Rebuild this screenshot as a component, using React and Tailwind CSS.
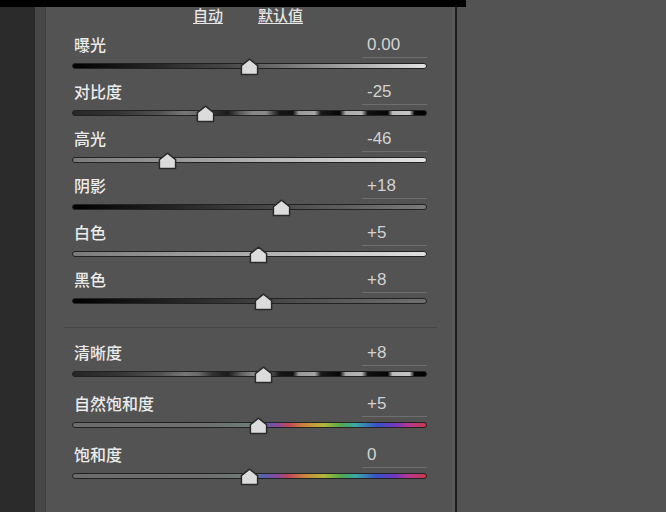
import React from "react";

const CJK = { fontFamily: '"Noto Sans CJK SC", "Noto Sans", sans-serif' };

const contrastStops = [
  [72, "#262626"], [120, "#353535"], [160, "#525252"], [185, "#777777"], [198, "#6a6a6a"],
  [212, "#333333"], [228, "#1a1a1a"], [240, "#5a5a5a"], [252, "#858585"], [266, "#8a8a8a"],
  [274, "#404040"], [280, "#151515"], [293, "#111111"], [299, "#999999"], [315, "#a5a5a5"],
  [321, "#1a1a1a"], [340, "#050505"], [346, "#aaaaaa"], [362, "#b5b5b5"], [368, "#111111"],
  [388, "#050505"], [393, "#bbbbbb"], [410, "#c5c5c5"], [415, "#050505"], [427, "#000000"],
].map(([x, c]) => [(x - 72) / 355, c]);

const colorStops = [
  [0, "#6b6b6b"], [0.4, "#6e706e"], [0.5, "#6d7d76"], [0.54, "#5a5fae"], [0.58, "#8a4a9a"],
  [0.61, "#c04858"], [0.66, "#c98a3a"], [0.71, "#b0b838"], [0.76, "#50a850"], [0.8, "#3aa8a8"],
  [0.86, "#3a50c8"], [0.91, "#7038c0"], [0.95, "#b83890"], [1, "#c83848"],
];

const gradients = {
  exposure: [[0, "#000000"], [0.45, "#4a4a4a"], [1, "#e2e2e2"]],
  contrast: contrastStops,
  highlights: [[0, "#7a7a7a"], [1, "#e4e4e4"]],
  shadows: [[0, "#000000"], [0.5, "#404040"], [1, "#7a7a7a"]],
  whites: [[0, "#7a7a7a"], [1, "#e0e0e0"]],
  blacks: [[0, "#000000"], [0.6, "#4a4a4a"], [1, "#707070"]],
  color: colorStops,
};

const group1 = [
  { id: "g1", label: "曝光", value: "0.00", v: 0, g: "exposure" },
  { id: "g2", label: "对比度", value: "-25", v: -25, g: "contrast" },
  { id: "g3", label: "高光", value: "-46", v: -46, g: "highlights" },
  { id: "g4", label: "阴影", value: "+18", v: 18, g: "shadows" },
  { id: "g5", label: "白色", value: "+5", v: 5, g: "whites" },
  { id: "g6", label: "黑色", value: "+8", v: 8, g: "blacks" },
];
const group2 = [
  { id: "g7", label: "清晰度", value: "+8", v: 8, g: "contrast" },
  { id: "g8", label: "自然饱和度", value: "+5", v: 5, g: "color" },
  { id: "g9", label: "饱和度", value: "0", v: 0, g: "color" },
];

function Track({ id, stops }) {
  return (
    <svg width="355" height="6" viewBox="0 0 355 6" className="block">
      <defs>
        <linearGradient id={id} x1="0" x2="1" y1="0" y2="0">
          {stops.map(([o, c], i) => (
            <stop key={i} offset={o} stopColor={c} />
          ))}
        </linearGradient>
      </defs>
      <rect x="0.5" y="0.5" width="354" height="5" rx="2.5" fill={`url(#${id})`} stroke="#222" strokeWidth="1" />
    </svg>
  );
}

function Thumb({ v }) {
  const x = ((v + 100) / 200) * 355 - 9.5;
  return (
    <svg width="19" height="18" viewBox="0 0 19 18" className="absolute top-0" style={{ left: `${x}px` }}>
      <path d="M9.5 1.2 L17.6 7.6 L17.6 16.6 L1.4 16.6 L1.4 7.6 Z" fill="#dcdcdc" stroke="#2a2a2a" strokeWidth="1.5" strokeLinejoin="round" />
    </svg>
  );
}

function Row({ item, mb }) {
  return (
    <div className={mb}>
      <div className="flex items-start justify-between h-[23px]">
        <span className="pl-[2px] -mt-[1px] text-[16px] leading-[20px] text-[#ebebeb] font-medium" style={CJK}>
          {item.label}
        </span>
        <div className="w-[65px] h-[23px] border-b border-[#6e6e6e] pl-[5px] text-[17px] leading-[20px] text-[#d2d2d2] font-['Liberation_Sans',sans-serif]">
          {item.value}
        </div>
      </div>
      <div className="relative h-[16px] flex items-center">
        <Track id={item.id} stops={gradients[item.g]} />
        <Thumb v={item.v} />
      </div>
    </div>
  );
}

export default function App() {
  return (
    <div className="w-[666px] h-[512px] bg-[#535353] flex flex-col overflow-hidden">
      <div className="flex h-[7px] shrink-0">
        <div className="w-[466px] bg-black" />
      </div>
      <div className="flex flex-1">
        <div className="w-[35px] bg-[#2b2b2b]" />
        <div className="w-[11px] bg-[#474747] border-r border-[#3e3e3e]" />
        <div className="w-[406px] pl-[26px] pr-[25px]">
          <div className="h-[28px] flex justify-center gap-[35px] pr-[3px] text-[15px] leading-[16px] text-[#e6e6e6] font-medium" style={CJK}>
            <span className="underline underline-offset-[2px]">自动</span>
            <span className="underline underline-offset-[2px]">默认值</span>
          </div>
          {group1.map((it, i) => (
            <Row key={it.id} item={it} mb={i < group1.length - 1 ? "mb-[8px]" : ""} />
          ))}
          <div className="mt-[18px] mb-[15px] -ml-[8px] -mr-[10px] h-px bg-[#464646]" />
          {group2.map((it, i) => (
            <Row key={it.id} item={it} mb={i < group2.length - 1 ? "mb-[12px]" : ""} />
          ))}
        </div>
        <div className="w-[3px] bg-[#5a5a5a]" />
        <div className="w-[2px] bg-[#1e1e1e]" />
        <div className="flex-1" />
      </div>
    </div>
  );
}
